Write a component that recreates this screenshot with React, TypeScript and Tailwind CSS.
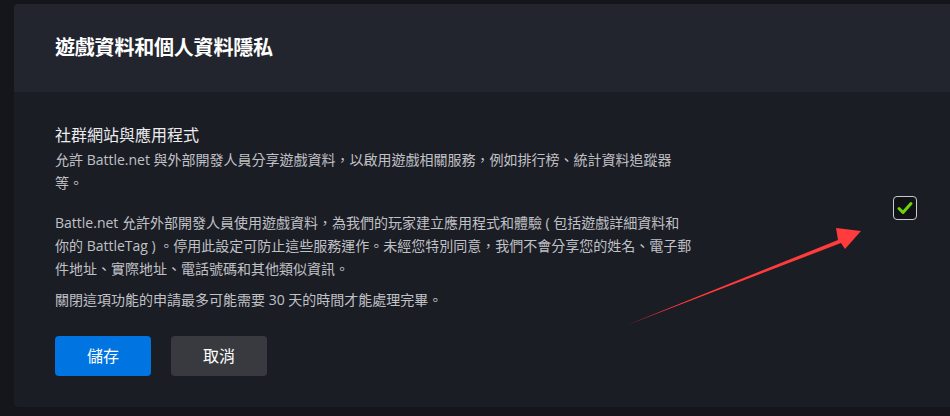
import React from 'react'

const font = { fontFamily: '"Open Sans", "Noto Sans CJK TC", sans-serif' }

export default function App() {
  return (
    <div className="relative w-[950px] h-[416px] overflow-hidden bg-[#14161c] pt-[4px]" style={font}>
      <div className="ml-[14px] w-[980px] h-[403px] rounded-[4px] overflow-hidden bg-[#1b1d25]">
        <div className="h-[88px] bg-[#22252e] flex items-center pl-[41px]">
          <h1 className="text-[20px] font-bold text-white tracking-[-0.2px]">遊戲資料和個人資料隱私</h1>
        </div>
        <div className="flex items-center pl-[41px] pt-[31px]">
          <div className="w-[641px] shrink-0">
            <h2 className="text-[16px] leading-[24px] text-[#ececee]">社群網站與應用程式</h2>
            <p className="mt-[1px] text-[14px] leading-[23px] text-[#c0c1c5]">
              允許 Battle.net 與外部開發人員分享遊戲資料，以啟用遊戲相關服務，例如排行榜、統計資料追蹤器等。
            </p>
            <p className="mt-[17px] text-[14px] leading-[23px] text-[#c0c1c5]">
              {'Battle.net 允許外部開發人員使用遊戲資料，為我們的玩家建立應用程式和體驗 ( 包括遊戲詳細資料和你\u2060的 BattleTag ) 。停用此設定可防止這些服務運作。未經您特別同意，我們不會分享您的姓名、電子郵件地址、實際地址、電話號碼和其他類似資訊。'}
            </p>
            <p className="mt-[8px] text-[14px] leading-[23px] text-[#c0c1c5]">
              關閉這項功能的申請最多可能需要 30 天的時間才能處理完畢。
            </p>
          </div>
          <div className="ml-[197px] mt-[-18px] w-[24px] h-[24px] rounded-[4px] border-[1.5px] border-[#c9cacd] bg-[#111216] flex items-center justify-center">
            <svg width="18" height="18" viewBox="0 0 18 18" fill="none">
              <path d="M3 9.5 L7 13.5 L15 4.5" stroke="#6bd40d" strokeWidth="3" strokeLinecap="round" strokeLinejoin="round" />
            </svg>
          </div>
        </div>
        <div className="flex gap-[20px] pl-[41px] mt-[25px]">
          <button className="w-[96px] h-[40px] rounded-[4px] bg-[#0074e0] text-white text-[16px]">儲存</button>
          <button className="w-[96px] h-[40px] rounded-[4px] bg-[#393a40] text-white text-[16px]">取消</button>
        </div>
      </div>
      <svg className="absolute left-0 top-0 pointer-events-none" width="950" height="416">
        <path d="M627 325 L838 240 L836 228 L861 231 L845 249 L841 243 Z" fill="#ff3b3b" />
      </svg>
    </div>
  )
}
